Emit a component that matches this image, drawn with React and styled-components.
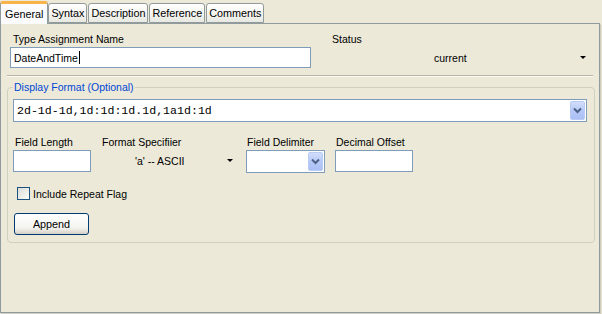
import React from "react";
import styled, { createGlobalStyle } from "styled-components";

const Global = createGlobalStyle`
  html, body {
    margin: 0;
    padding: 0;
    background: #ece9d8;
  }
  body {
    font-family: "Liberation Sans", "DejaVu Sans", sans-serif;
    font-size: 10.5px;
    color: #000;
  }
`;

const Screen = styled.div`
  width: 602px;
  height: 314px;
  background: #ece9d8;
  box-sizing: border-box;
  display: flex;
  flex-direction: column;
`;

const TabStrip = styled.div`
  display: flex;
  align-items: flex-end;
  height: 23px;
  padding-left: 0;
  position: relative;
  z-index: 1;
`;

const Tab = styled.div`
  box-sizing: border-box;
  height: ${(p) => (p.$active ? "23px" : "20px")};
  padding: 0 ${(p) => (p.$active ? "4px" : "2px")};
  margin-right: ${(p) => (p.$active ? "0" : "1px")};
  display: flex;
  align-items: center;
  border: 1px solid #919b9c;
  border-bottom: ${(p) => (p.$active ? "none" : "1px solid #919b9c")};
  border-top: ${(p) => (p.$active ? "3px solid #f8b44a" : "1px solid #919b9c")};
  border-radius: 3px 3px 0 0;
  background: ${(p) =>
    p.$active
      ? "#fcfcfe"
      : "linear-gradient(#ffffff, #f3f3ef 60%, #e8e8e2)"};
  font-size: 10.8px;
  line-height: 1;
  padding-top: ${(p) => (p.$active ? "0" : "1px")};
  margin-bottom: ${(p) => (p.$active ? "-1px" : "0")};
`;

const Panel = styled.div`
  box-sizing: border-box;
  width: 600px;
  height: 290px;
  border: 1px solid #919b9c;
  box-shadow: 1px 1px 0 #d0cdbd, 2px 2px 0 #e3e0d0;
  background: #ece9d8;
  padding: 8px 5px 0 5px;
  display: flex;
  flex-direction: column;
`;

const TopRow = styled.div`
  display: flex;
  padding: 0 4px 0 4px;
`;

const Column = styled.div`
  display: flex;
  flex-direction: column;
  width: ${(p) => p.$w || "auto"};
  margin-left: ${(p) => p.$ml || "0"};
`;

const Label = styled.div`
  height: 15px;
  line-height: 15px;
  padding-left: ${(p) => p.$pl || "3px"};
  white-space: nowrap;
`;

const TextBox = styled.div`
  box-sizing: border-box;
  width: ${(p) => p.$w};
  height: ${(p) => p.$h || "21px"};
  border: 1px solid #7f9db9;
  background: #fff;
  padding: 0 3px;
  display: flex;
  align-items: center;
`;

const Caret = styled.span`
  display: inline-block;
  width: 1px;
  height: 13px;
  background: #000;
  margin-left: 1px;
`;

const FlatCombo = styled.div`
  box-sizing: border-box;
  height: 21px;
  display: flex;
  align-items: center;
  padding-left: ${(p) => p.$pl};
  width: ${(p) => p.$w};
  position: relative;
`;

const SmallArrow = styled.span`
  position: absolute;
  right: ${(p) => p.$r || "4px"};
  top: 9px;
  width: 0;
  height: 0;
  border-left: 3px solid transparent;
  border-right: 3px solid transparent;
  border-top: 3px solid #000;
`;

const Separator = styled.div`
  margin: 7px 1px 0 1px;
  height: 1px;
  background: #aca899;
  border-bottom: 1px solid #fff;
  opacity: 0.8;
`;

const Group = styled.fieldset`
  margin: 4px 0 0 1px;
  width: 588px;
  box-sizing: border-box;
  height: 162px;
  border: 1px solid #d0d0bf;
  border-radius: 4px;
  padding: 6px 6px 0 5px;
  display: flex;
  flex-direction: column;
`;

const Legend = styled.legend`
  color: #0046d5;
  padding: 0 1px;
  margin-left: 0;
`;

const ComboBox = styled.div`
  box-sizing: border-box;
  width: ${(p) => p.$w};
  height: ${(p) => p.$h || "22px"};
  border: 1px solid #7f9db9;
  background: #fff;
  display: flex;
  align-items: stretch;
`;

const ComboText = styled.div`
  flex: 1;
  display: flex;
  align-items: center;
  padding-left: 3px;
  font-family: ${(p) =>
    p.$mono ? '"Liberation Mono", "DejaVu Sans Mono", monospace' : "inherit"};
  font-size: ${(p) => (p.$mono ? "11.6px" : "inherit")};
`;

const DropButton = styled.div`
  box-sizing: border-box;
  width: 15px;
  margin: 1px;
  border: 1px solid #b9cbf3;
  border-radius: 2px;
  background: linear-gradient(#d2ddfc, #b6c9f7 50%, #aabff5);
  display: flex;
  align-items: center;
  justify-content: center;
`;

const FieldRow = styled.div`
  display: flex;
  margin-top: 13px;
`;

const CheckRow = styled.label`
  display: flex;
  align-items: center;
  margin: 14px 0 0 4px;
  height: 13px;
`;

const CheckBox = styled.span`
  box-sizing: border-box;
  width: 13px;
  height: 13px;
  border: 1px solid #1c5180;
  background: linear-gradient(135deg, #dcdcd7, #fbfbf9);
  margin-right: 3px;
`;

const Button = styled.button`
  box-sizing: border-box;
  margin: 13px 0 0 1px;
  width: 75px;
  height: 22px;
  border: 1px solid #003c74;
  border-radius: 3px;
  background: linear-gradient(#ffffff, #f3f3ef 70%, #d6d0c5);
  font-family: inherit;
  font-size: 10.8px;
  color: #000;
  padding: 0;
`;

const Chevron = () => (
  <svg width="9" height="7" viewBox="0 0 9 7">
    <path d="M1 1.5 L4.5 5 L8 1.5" fill="none" stroke="#4d6185" strokeWidth="2" />
  </svg>
);

export default function App() {
  const tabs = ["General", "Syntax", "Description", "Reference", "Comments"];
  return (
    <>
      <Global />
      <Screen>
        <TabStrip>
          {tabs.map((t, i) => (
            <Tab key={t} $active={i === 0}>
              {t}
            </Tab>
          ))}
        </TabStrip>
        <Panel>
          <TopRow>
            <Column $w="301px">
              <Label>Type Assignment Name</Label>
              <TextBox $w="301px">
                DateAndTime
                <Caret />
              </TextBox>
            </Column>
            <Column $w="261px" $ml="19px">
              <Label $pl="2px">Status</Label>
              <FlatCombo $w="261px" $pl="104px">
                current
                <SmallArrow $r="5px" />
              </FlatCombo>
            </Column>
          </TopRow>
          <Separator />
          <Group>
            <Legend>Display Format (Optional)</Legend>
            <ComboBox $w="574px" $h="23px">
              <ComboText $mono>2d-1d-1d,1d:1d:1d.1d,1a1d:1d</ComboText>
              <DropButton>
                <Chevron />
              </DropButton>
            </ComboBox>
            <FieldRow>
              <Column $w="78px">
                <Label $pl="2px">Field Length</Label>
                <TextBox $w="78px" $h="22px" />
              </Column>
              <Column $w="134px" $ml="11px">
                <Label $pl="0">Format Specifiier</Label>
                <FlatCombo $w="134px" $pl="33px">
                  'a' -- ASCII
                  <SmallArrow $r="3px" />
                </FlatCombo>
              </Column>
              <Column $w="79px" $ml="10px">
                <Label $pl="1px">Field Delimiter</Label>
                <ComboBox $w="79px" $h="23px">
                  <ComboText />
                  <DropButton>
                    <Chevron />
                  </DropButton>
                </ComboBox>
              </Column>
              <Column $w="78px" $ml="10px">
                <Label $pl="1px">Decimal Offset</Label>
                <TextBox $w="78px" $h="22px" />
              </Column>
            </FieldRow>
            <CheckRow>
              <CheckBox />
              Include Repeat Flag
            </CheckRow>
            <div>
              <Button>Append</Button>
            </div>
          </Group>
        </Panel>
      </Screen>
    </>
  );
}
